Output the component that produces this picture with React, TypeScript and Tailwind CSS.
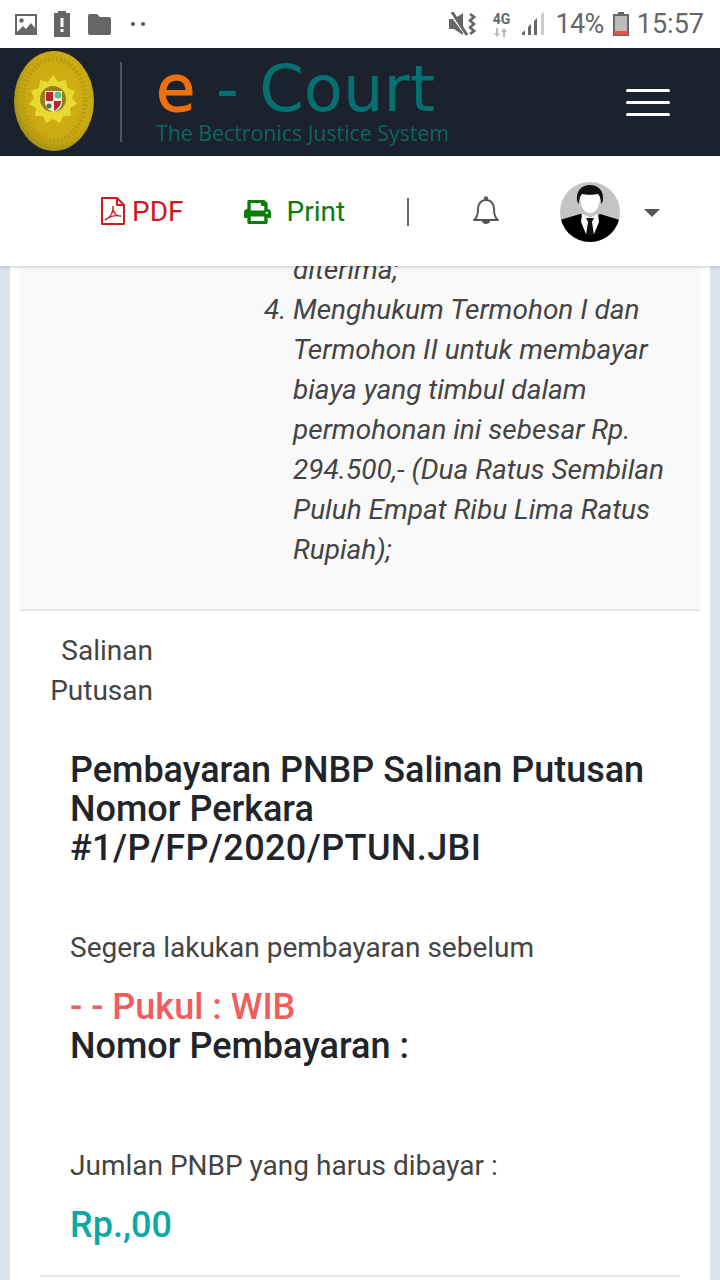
import { FaPrint } from "react-icons/fa";

function StatusBar() {
  return (
    <div className="h-12 bg-white flex items-center justify-between pl-[14px] pr-4 text-[#666]">
      <div className="flex items-center">
        <svg width="24" height="22" viewBox="0 0 24 22" className="block">
          <path fillRule="evenodd" fill="#666" d="M1 1h22v21H1zM3 3v17h18V3z" />
          <circle cx="7.500" cy="7.500" r="2.200" fill="#666" />
          <path fill="#666" d="M3 19l6-6 3 3 5-6 4 5v5H3z" />
        </svg>
        <svg width="18" height="26" viewBox="0 0 18 26" className="block ml-[15px]">
          <path fill="#666" fillRule="evenodd" d="M5 0h8v2h4v24H1V2h4zM7.500 7v9h3V7zM7.500 18v3h3v-3z" />
        </svg>
        <svg width="25" height="21" viewBox="0 0 25 21" className="block ml-4">
          <path fill="#666" d="M1 2a2 2 0 0 1 2-2h7l3 3h9a2 2 0 0 1 2 2v14a2 2 0 0 1-2 2H3a2 2 0 0 1-2-2z" />
        </svg>
        <div className="flex gap-[6px] ml-[19px]">
          <span className="w-1 h-1 rounded-full bg-[#555]" />
          <span className="w-1 h-1 rounded-full bg-[#555]" />
        </div>
      </div>
      <div className="flex items-center">
        <svg width="27" height="24" viewBox="0 0 27 24" className="block">
          <path fill="#666" d="M0 7h5l9-6v22l-9-6H0z" />
          <path stroke="#fff" strokeWidth="2" d="M0 0l16 22" />
          <path stroke="#666" strokeWidth="3" fill="none" d="M3 0l15 23" />
          <path stroke="#666" strokeWidth="2.600" fill="none" d="M21 2l4 3-4 3.500 4 3.500-4 3.500 4 3.500-4 3" />
        </svg>
        <div className="ml-[15px] flex flex-col items-center w-[20px] leading-none">
          <span className="text-[14px] font-bold leading-[14px] text-[#666]">4G</span>
          <svg width="14" height="9" viewBox="0 0 14 9" className="block mt-[2px]">
            <path fill="#bbb" d="M2 0h2v5h2L3 9 0 5h2zM10 0l3 4h-2v5H9V4H7z" />
          </svg>
        </div>
        <svg width="24" height="24" viewBox="0 0 24 24" className="block ml-[10px]">
          <path fill="#666" d="M1 21l3-3v5H1zM7 15l3-3v11H7zM13 9l3-3v17h-3z" />
          <path fill="#ccc" d="M20 2l3-2v23h-3z" />
        </svg>
        <span className="ml-[10px] text-[27px] leading-none tracking-[-0.6px]">14%</span>
        <svg width="16" height="24" viewBox="0 0 16 24" className="block ml-[9px]">
          <path fill="#666" fillRule="evenodd" d="M5 0h6v2h5v22H0V2h5zM2 4v18h12V4z" />
          <path fill="#bbb" d="M2 4h12v15H2z" />
          <path fill="#e0544c" d="M1 19h14v4H1z" />
        </svg>
        <span className="ml-2 text-[27px] leading-none">15:57</span>
      </div>
    </div>
  );
}

function Seal() {
  return (
    <svg width="82" height="102" viewBox="0 0 82 102" className="block blur-[0.6px]">
      <defs>
        <radialGradient id="seal" cx="55%" cy="45%" r="62%">
          <stop offset="0%" stopColor="#d4b412" />
          <stop offset="72%" stopColor="#c9a812" />
          <stop offset="100%" stopColor="#8d8418" />
        </radialGradient>
      </defs>
      <ellipse cx="41" cy="51" rx="40" ry="50" fill="url(#seal)" />
      <ellipse cx="41" cy="50" rx="31" ry="41" fill="none" stroke="#b89c10" strokeWidth="5" strokeDasharray="2 2" />
      <path
        fill="#e8da30"
        d="M40 25l5 7 8-2 1 8 8 3-3 7 5 6-7 4 1 8-8 0-3 7-7-4-7 4-3-7-8 0 1-8-7-4 5-6-3-7 8-3 1-8 8 2z"
      />
      <circle cx="40" cy="49" r="13" fill="#96801c" />
      <path fill="#f0eee0" d="M32 41h17v11c0 5-4 9-8.500 10-4.500-1-8.500-5-8.500-10z" />
      <path fill="#b8262b" d="M33 42h7v9h-7zM41 51h7c0 4-3 8-7 10z" />
      <circle cx="45" cy="45" r="3.500" fill="#5cc97a" />
      <circle cx="36" cy="56" r="2.500" fill="#3f7a4c" />
    </svg>
  );
}

function Portrait() {
  return (
    <svg width="60" height="60" viewBox="0 0 60 60" className="block">
      <defs>
        <clipPath id="avatar">
          <circle cx="30" cy="30" r="30" />
        </clipPath>
      </defs>
      <g clipPath="url(#avatar)">
        <rect width="60" height="60" fill="#c4c4c4" />
        <path fill="#000" d="M0 38l20-6 10 3 10-3 20 6v22H0z" />
        <path fill="#fff" d="M22 32l8 3 8-3 1 8-5 12h-8l-5-12z" />
        <path fill="#111" d="M26 36h8l-2 4 2 13h-8l2-13z" />
        <path fill="#fff" d="M20 15c0-7 4-9 10-9s10 2 10 9c0 9-4 16-10 16s-10-7-10-16z" />
        <path fill="#111" d="M17 19c-1-11 5-16 13-16s14 5 13 16l-2 3c0-5-1-8-3-10-4 1-12 1-16 0-2 2-3 5-3 10z" />
      </g>
    </svg>
  );
}

function PdfIcon() {
  return (
    <svg width="24" height="28" viewBox="0 0 24 28" fill="none" stroke="#c9201f" strokeWidth="2" className="block">
      <path strokeLinejoin="round" d="M1 1h15l7 7v19H1zM16 1v7h7" />
      <path strokeWidth="1.400" d="M4 23c5-2 9-8 8-14-1 6 4 11 8 10-5-1-11 0-16 4z" />
    </svg>
  );
}

function Bell() {
  return (
    <svg width="28" height="30" viewBox="0 0 28 30" fill="none" stroke="#555" strokeWidth="2" className="block">
      <path strokeLinejoin="round" d="M2 24c3-2 4-5 4-11 0-5 3-9 8-9s8 4 8 9c0 6 1 9 4 11z" />
      <circle cx="14" cy="2.500" r="1.200" />
      <path fill="#555" stroke="none" d="M10 25h8c0 2-2 3-4 3s-4-1-4-3z" />
    </svg>
  );
}

export default function App() {
  return (
    <div className="h-[1280px] w-[720px] overflow-hidden bg-[#dde3ec] font-['Roboto',sans-serif] flex flex-col">
      <StatusBar />

      <header className="h-[108px] bg-[#1b222d] flex items-center pl-[13px] pr-[50px]">
        <div className="-mt-[3px]">
          <Seal />
        </div>
        <div className="w-[2px] h-[80px] bg-[#4e5661] ml-[25px]" />
        <div className="ml-[34px] flex flex-col w-[300px] -mt-[2px] blur-[0.4px]">
          <div className="font-['DejaVu_Sans',sans-serif] text-[64px] leading-[64px] text-[#047070] whitespace-nowrap">
            <span className="text-[#f0700d] [-webkit-text-stroke:1px_#f0700d]">e</span> - Court
          </div>
          <div className="font-['Open_Sans',sans-serif] text-[21.300px] leading-6 font-medium text-[#0a6767] whitespace-nowrap">
            The Bectronics Justice System
          </div>
        </div>
        <div className="ml-auto flex flex-col gap-[9px]">
          <span className="block w-11 h-[3px] bg-white rounded-sm" />
          <span className="block w-11 h-[3px] bg-white rounded-sm" />
          <span className="block w-11 h-[3px] bg-white rounded-sm" />
        </div>
      </header>

      <nav className="relative z-10 h-[110px] bg-white shadow-[0_1px_4px_rgba(0,0,0,0.2)] flex items-center pl-[101px] pt-[2px] text-[28px]">
        <div className="-mt-[2px]">
          <PdfIcon />
        </div>
        <span className="ml-[7px] text-[#d0181c]">PDF</span>
        <FaPrint preserveAspectRatio="none" className="ml-[60px] w-[27px] h-6 text-[#0a7d0a]" />
        <span className="ml-4 text-[#0a7d0a]">Print</span>
        <span className="ml-[62px] w-[2px] h-7 bg-[#666]" />
        <div className="ml-[63px] -mt-[2px]">
          <Bell />
        </div>
        <div className="ml-[60px]">
          <Portrait />
        </div>
        <span className="ml-6 mt-[2px] w-0 h-0 border-x-[8px] border-x-transparent border-t-[8px] border-t-[#555]" />
      </nav>

      <main className="flex-1 mx-[10px] bg-white overflow-hidden text-[#444]">
        <section className="mx-[10px] h-[345px] overflow-hidden bg-[#f9f9fa] border-b-2 border-[#e3e6ea] pl-[244px] pr-[30px] italic text-[28px] leading-10">
          <div className="-mt-4 ml-[29px]">diterima;</div>
          <ol className="flex flex-col">
            <li className="flex">
              <span className="w-[29px] shrink-0">4.</span>
              <span>
                Menghukum Termohon I dan Termohon II untuk membayar biaya yang timbul dalam permohonan ini sebesar Rp.
                294.500,- (Dua Ratus Sembilan Puluh Empat Ribu Lima Ratus Rupiah);
              </span>
            </li>
          </ol>
        </section>

        <div className="w-[143px] pt-5 text-right text-[28px] leading-10">
          <div>Salinan</div>
          <div>Putusan</div>
        </div>

        <div className="pl-[60px] pr-10">
          <h1 className="mt-10 text-[36px] leading-[39px] font-medium text-[#212529]">
            Pembayaran PNBP Salinan Putusan
            <br />
            Nomor Perkara
            <br />
            <span className="tracking-[0.4px]">#1/P/FP/2020/PTUN.JBI</span>
          </h1>
          <p className="mt-[60px] text-[28px] leading-10">Segera lakukan pembayaran sebelum</p>
          <div className="mt-5 text-[36px] leading-[39px] font-medium text-[#f05d5d]">- - Pukul : WIB</div>
          <div className="text-[36px] leading-[39px] font-medium text-[#212529]">Nomor Pembayaran :</div>
          <p className="mt-20 text-[28px] leading-10">Jumlan PNBP yang harus dibayar :</p>
          <div className="mt-5 text-[36px] leading-[39px] font-medium text-[#0aa8a8]">Rp.,00</div>
        </div>

        <div className="mx-[30px] mt-[30px] h-[2px] bg-[#e3e6ea]" />
      </main>
    </div>
  );
}
